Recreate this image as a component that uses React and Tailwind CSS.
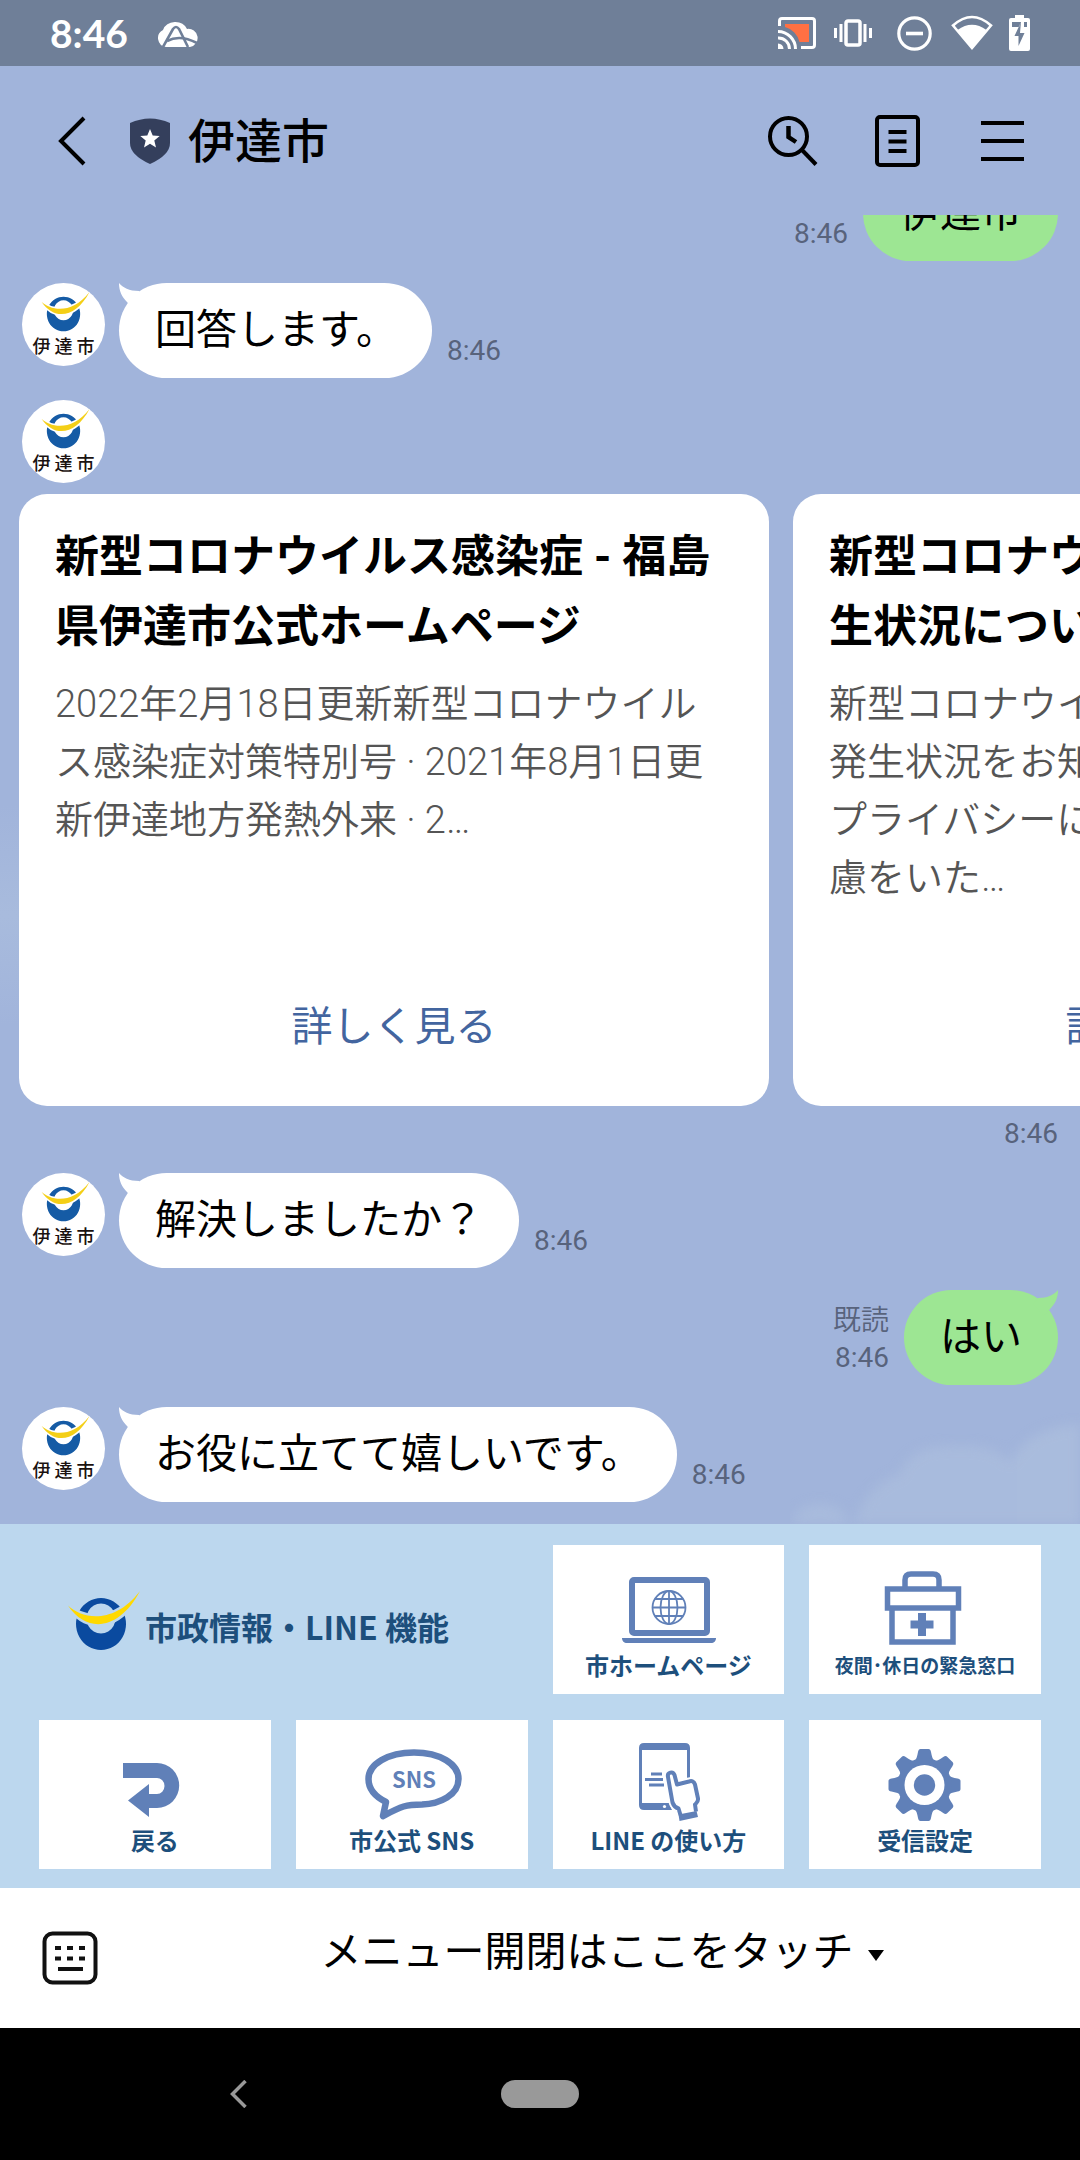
const FONT = "font-[Roboto,'Noto_Sans_CJK_JP',sans-serif]";
const MENU_FONT = "font-['Noto_Sans_CJK_JP',sans-serif]";

function Emblem({ className, blue, yellow, gap }) {
  return (
    <svg viewBox="0 0 72 60" className={className} aria-hidden="true">
      <path
        fillRule="evenodd"
        fill={blue}
        d="M33 7a25 26 0 1 0 0.01 0zM33 12.5a14.5 15 0 1 1 -0.01 0z"
      />
      <path
        d="M0 14.5C14 28 46 34 72 0C52 38 20 44 0 14.5z"
        fill={gap}
        stroke={gap}
        strokeWidth="5"
      />
      <path d="M0 14.5C14 28 46 34 72 0C52 38 20 44 0 14.5z" fill={yellow} />
    </svg>
  );
}

function Avatar() {
  return (
    <div className="flex size-[83px] shrink-0 flex-col items-center overflow-hidden rounded-full bg-white pt-[9px]">
      <Emblem className="ml-[3px] h-[40px] w-[49px]" blue="#155ba5" yellow="#f4cf17" gap="#ffffff" />
      <div className={`${MENU_FONT} mt-[2px] flex gap-1 text-[18px] leading-[22px] font-medium text-[#1a1210]`}>
        <span>伊</span>
        <span>達</span>
        <span>市</span>
      </div>
    </div>
  );
}

function Tail({ className }) {
  return (
    <svg viewBox="0 0 26 26" className={className} aria-hidden="true">
      <path d="M0 0C4 4.500 10 8 20 8L25 14L14 26L8 19C3 14 0 8 0 0z" fill="currentColor" />
    </svg>
  );
}

function Time({ read }) {
  return (
    <div className="flex flex-col items-end pb-[9px] text-[28px] leading-[37px] text-[#58637c]">
      {read && <span className="font-[350]">既読</span>}
      <time dateTime="08:46">8:46</time>
    </div>
  );
}

function Received({ text, stop }) {
  return (
    <div className="flex pl-[22px]">
      <Avatar />
      <div className="ml-[14px] flex items-end gap-[15px]">
        <div className="relative text-white">
          <Tail className="absolute top-0 left-0 size-[26px]" />
          <p
            className={`rounded-full bg-white py-[16px] pl-[36px] text-[41px] leading-[63px] text-black ${stop ? "pr-[35px]" : "pr-[36px]"}`}
          >
            {text}
          </p>
        </div>
        <Time />
      </div>
    </div>
  );
}

function Sent({ text, read }) {
  return (
    <div className="flex items-end justify-end gap-[15px] pr-[22px]">
      <Time read={read} />
      <div className="relative text-[#9de693]">
        <Tail className="absolute top-0 right-0 size-[26px] -scale-x-100" />
        <p className="rounded-full bg-[#9de693] px-[36px] py-[16px] text-[41px] leading-[63px] text-black">{text}</p>
      </div>
    </div>
  );
}

function Card({ title, body }) {
  return (
    <article className="flex h-[612px] w-[750px] shrink-0 flex-col rounded-[28px] bg-white px-[36px] pt-[28px]">
      <h2 className="text-[44px] leading-[70px] font-bold whitespace-nowrap text-black">
        {title.map((line) => (
          <span key={line} className="block">{line}</span>
        ))}
      </h2>
      <p className="mt-[13px] text-[38px] leading-[58px] font-[350] whitespace-nowrap text-[#555555]">
        {body.map((line) => (
          <span key={line} className="block">{line}</span>
        ))}
      </p>
      <a href="#detail" className="mt-auto mb-[48px] text-center text-[41px] leading-[62px] text-[#43659f]">
        詳しく見る
      </a>
    </article>
  );
}

function LaptopIcon() {
  return (
    <svg viewBox="0 0 100 100" className="size-[100px]" fill="none" stroke="#6080b8" aria-hidden="true">
      <rect x="14" y="33" width="75" height="53" rx="2" strokeWidth="6" />
      <path d="M4 91h94c0 3-2 5-5 5H9c-3 0-5-2-5-5z" fill="#6080b8" stroke="none" />
      <g strokeWidth="1.8">
        <circle cx="51" cy="60.500" r="16.500" />
        <ellipse cx="51" cy="60.500" rx="8.500" ry="16.500" />
        <path d="M51 44v33M34.500 60.500h33M37 52h28M37 69h28" />
      </g>
    </svg>
  );
}

function KitIcon() {
  return (
    <svg viewBox="0 0 100 100" className="size-[100px]" fill="none" stroke="#6080b8" strokeWidth="5.5" aria-hidden="true">
      <path d="M30 41v-8q0-6 6-6h22q6 0 6 6v8" />
      <rect x="12.500" y="42" width="71" height="19" />
      <path d="M17 63v32h61V63" />
      <path d="M47 66v23M35.500 77.500h23" strokeWidth="8" />
    </svg>
  );
}

function BackIcon() {
  return (
    <svg viewBox="0 0 100 100" className="size-[100px]" aria-hidden="true">
      <path d="M18 41H52A22 22.300 0 0 1 52 86H44V95L23 78.500L44 62V72H52A7.500 8 0 0 0 52 56H18Z" fill="#6080b8" />
    </svg>
  );
}

function SnsIcon() {
  return (
    <svg viewBox="0 0 104 100" className="h-[100px] w-[104px]" aria-hidden="true">
      <path
        d="M54 30.500C80 30.500 98.500 42 98.500 57C98.500 73 80 82 62 82.500C46 82.500 42 84 23 94L26 80C14 74 8.500 66 8.500 57C8.500 42 28 30.500 54 30.500Z"
        fill="none"
        stroke="#6080b8"
        strokeWidth="6.5"
        strokeLinejoin="round"
      />
      <text x="54" y="65.500" textAnchor="middle" className={`${MENU_FONT} text-[22px] font-bold`} fill="#6080b8">
        SNS
      </text>
    </svg>
  );
}

function PhoneIcon() {
  return (
    <svg viewBox="0 0 100 104" className="h-[104px] w-[100px]" fill="none" stroke="#6080b8" aria-hidden="true">
      <path d="M54 92H26q-5 0-5-5V30q0-5 5-5h41q5 0 5 5V60H69V32H24V85H51z" fill="#6080b8" stroke="none" />
      <circle cx="46.500" cy="88.500" r="1.600" fill="#ffffff" stroke="none" />
      <path d="M33 56h11M27 61.500h18M31 67h15" strokeWidth="3" />
      <path
        d="M49 59c-1-5 6-6 7-2l3 9 12-3c3-1 5 0 6 3l4 14c1 3-1 5-4 6l1 8-15 3-2-6c-4-1-6-3-7-7z"
        fill="#ffffff"
        stroke="#ffffff"
        strokeWidth="7"
      />
      <path
        d="M62.500 97l-2-6.500c-3-1-5-3-6-6L50 59c-1-5 5-6 6.500-2l2.500 9.500 12-3c3-1 5 0 6 3l3 14c.5 3-1 4-3 6l1 7"
        fill="#ffffff"
        strokeWidth="4"
        strokeLinejoin="round"
      />
      <path d="M60.500 96.500L78.500 93L80 99L61.500 103z" fill="#6080b8" stroke="none" />
    </svg>
  );
}

function GearIcon() {
  const angles = [0, 45, 90, 135, 180, 225, 270, 315];
  return (
    <svg viewBox="0 0 100 100" className="size-[100px]" fill="#6080b8" aria-hidden="true">
      {angles.map((a) => (
        <path
          key={a}
          transform={`translate(49.5 63) rotate(${a})`}
          d="M-11 -22L-8 -27Q-7 -30 -6.500 -33Q-6 -36 -4 -36H4Q6 -36 6.500 -33Q7 -30 8 -27L11 -22z"
        />
      ))}
      <circle cx="49.500" cy="63" r="27" />
      <circle cx="49.500" cy="63" r="20" fill="#ffffff" />
      <circle cx="49.500" cy="63" r="10.700" />
    </svg>
  );
}

function Tile({ icon, label, small }) {
  return (
    <button type="button" className="flex h-[149px] min-w-0 flex-col items-center bg-white">
      <span className="flex h-[102px] items-end justify-center">{icon}</span>
      <span
        className={`${MENU_FONT} leading-[36px] font-bold whitespace-nowrap text-[#1d4f7c] ${small ? "text-[19px]" : "text-[24px]"}`}
      >
        {label}
      </span>
    </button>
  );
}

function StatusBar() {
  return (
    <div className="flex h-[66px] shrink-0 items-center justify-between bg-[#6f7f98] pr-[50px] pl-[50px] text-white">
      <div className="flex items-center gap-[28px]">
        <span className="font-[Lato,sans-serif] text-[39px] leading-[66px] font-bold">8:46</span>
        <svg viewBox="0 0 42 28" className="h-[28px] w-[42px]" fill="#ffffff" aria-hidden="true">
          <path d="M10 28a9 9 0 0 1-3-17A13 12 0 0 1 31 10a9 9 0 0 1 3 18z" />
          <path d="M7 28L17 10q3-4 6 0l9 18" fill="none" stroke="#6f7f98" strokeWidth="2.600" />
          <path d="M11 22Q24 15 41 24" fill="none" stroke="#6f7f98" strokeWidth="2.600" />
        </svg>
      </div>
      <div className="flex items-center">
        <svg viewBox="0 0 38 32" className="h-[32px] w-[38px]" fill="none" stroke="#ffffff" strokeWidth="3" aria-hidden="true">
          <path d="M7 7h24v18H21.500A20 20 0 0 0 7 10z" fill="#ff7043" stroke="none" />
          <path d="M1.500 9V4q0-2.500 2.500-2.500h30q2.500 0 2.500 2.500v24q0 2.500-2.500 2.500H23" />
          <path d="M0 14.500A17.500 17.500 0 0 1 17.500 32M0 21A11 11 0 0 1 11.500 32" />
          <path d="M0 26.500A5.500 5.500 0 0 1 5.500 32H0z" fill="#ffffff" stroke="none" />
        </svg>
        <svg viewBox="0 0 38 28" className="ml-[18px] h-[28px] w-[38px]" fill="none" stroke="#ffffff" strokeWidth="3" aria-hidden="true">
          <rect x="12" y="2" width="14" height="24" rx="2" strokeWidth="3.500" />
          <path d="M1.500 9v10M7 5v18M31 5v18M36.500 9v10" />
        </svg>
        <svg viewBox="0 0 35 35" className="ml-[25px] size-[35px]" fill="none" stroke="#ffffff" strokeWidth="3.200" aria-hidden="true">
          <circle cx="17.500" cy="17.500" r="15.700" />
          <path d="M9 17.500h17" strokeWidth="3.600" />
        </svg>
        <svg viewBox="0 0 42 36" className="ml-[19px] h-[36px] w-[42px]" aria-hidden="true">
          <path d="M2 10.500Q21 -6.500 40 10.500L21 33z" fill="none" stroke="#ffffff" strokeWidth="2.600" />
          <path d="M6.500 15Q21 4.500 35.500 15L21 34z" fill="#ffffff" />
        </svg>
        <svg viewBox="0 0 21 36" className="ml-[16px] h-[36px] w-[21px]" aria-hidden="true">
          <path d="M6 0h9v3h4q2 0 2 2v29q0 2-2 2H2q-2 0-2-2V5q0-2 2-2h4z" fill="#ffffff" />
          <path d="M3 7h9l-2 5H3zM15 7h3v5h-3zM12 7L5.500 21H9.500V31L15.500 18H11z" fill="#6f7f98" />
        </svg>
      </div>
    </div>
  );
}

function Header() {
  return (
    <header className="flex h-[149px] shrink-0 items-center px-[56px] text-black">
      <button type="button" aria-label="戻る">
        <svg viewBox="0 0 30 50" className="h-[50px] w-[30px]" fill="none" stroke="currentColor" strokeWidth="4" aria-hidden="true">
          <path d="M28 2L5 25L28 48" />
        </svg>
      </button>
      <svg viewBox="0 0 40 46" className="ml-[44px] h-[46px] w-[40px]" aria-hidden="true">
        <path d="M0 5Q20 -4 40 5V25Q40 37 20 46Q0 37 0 25z" fill="#343f5c" />
        <path d="M20 11l2.700 6.500 7 .5-5.400 4.600 1.700 6.900-6-3.800-6 3.800 1.700-6.900L10.300 18l7-.5z" fill="#ffffff" />
      </svg>
      <h1 className="mt-[2px] ml-[18px] text-[47px] leading-[70px] font-medium">伊達市</h1>
      <div className="ml-auto flex items-center">
        <button type="button" aria-label="検索">
          <svg viewBox="0 0 50 50" className="size-[50px]" fill="none" stroke="currentColor" strokeWidth="4" aria-hidden="true">
            <circle cx="20.500" cy="20.500" r="18.500" />
            <path d="M34 34L48 48.500" />
            <path d="M20.500 10v11l7.500 5" strokeWidth="4.500" />
          </svg>
        </button>
        <button type="button" aria-label="ノート" className="ml-[57px]">
          <svg viewBox="0 0 45 52" className="h-[52px] w-[45px]" fill="none" stroke="currentColor" strokeWidth="4" aria-hidden="true">
            <rect x="2" y="2" width="41" height="48" rx="3" />
            <path d="M13.500 17h18M13.500 26.500h18M13.500 36h18" />
          </svg>
        </button>
        <button type="button" aria-label="メニュー" className="ml-[61px]">
          <svg viewBox="0 0 43 42" className="h-[42px] w-[43px]" stroke="currentColor" strokeWidth="4" aria-hidden="true">
            <path d="M0 3h43M0 21h43M0 39h43" />
          </svg>
        </button>
      </div>
    </header>
  );
}

function Clouds() {
  return (
    <>
      <div className="pointer-events-none absolute right-0 bottom-0 h-[120px] w-[290px] overflow-hidden">
        <svg viewBox="0 0 290 120" className="h-full w-full blur-[6px]" fill="#b0c2de" aria-hidden="true">
          <g opacity="0.55">
            <ellipse cx="30" cy="124" rx="30" ry="24" />
            <path d="M60 130Q75 80 110 70Q120 40 165 42Q205 40 220 58Q240 20 300 20V130z" />
          </g>
        </svg>
      </div>
      <div className="pointer-events-none absolute top-[590px] left-0 h-[220px] w-[20px] bg-linear-to-b from-transparent via-[#a8bbdd] to-transparent" />
    </>
  );
}

export default function App() {
  return (
    <div className={`${FONT} flex h-screen w-full flex-col overflow-hidden bg-[#a1b4db]`} lang="ja">
      <StatusBar />
      <Header />
      <main className="relative flex min-h-0 flex-1 flex-col justify-end gap-[22px] overflow-hidden pb-[22px]">
        <Clouds />
        <Sent text="伊達市" />
        <Received text="回答します。" stop />
        <section className="relative">
          <div className="pl-[22px]">
            <Avatar />
          </div>
          <div className="mt-[11px] flex gap-[24px] overflow-hidden pl-[19px]">
            <Card
              title={["新型コロナウイルス感染症 - 福島", "県伊達市公式ホームページ"]}
              body={["2022年2月18日更新新型コロナウイル", "ス感染症対策特別号 · 2021年8月1日更", "新伊達地方発熱外来 · 2…"]}
            />
            <Card
              title={["新型コロナウイルス感染症の発", "生状況について"]}
              body={["新型コロナウイルス感染症の", "発生状況をお知らせします。", "プライバシーに十分なご配", "慮をいた…"]}
            />
          </div>
          <div className="pt-[11px] pr-[22px] text-right text-[28px] leading-[34px] text-[#58637c]">
            <time dateTime="08:46">8:46</time>
          </div>
        </section>
        <Received text="解決しましたか？" />
        <Sent text="はい" read />
        <Received text="お役に立てて嬉しいです。" stop />
      </main>
      <nav className="grid shrink-0 grid-cols-4 gap-x-[25px] gap-y-[26px] bg-[#bcd7ee] px-[39px] pt-[21px] pb-[19px]">
        <div className="col-span-2 flex items-center gap-[5px] pt-[12px] pl-[29px]">
          <Emblem className="mb-[9px] h-[60px] w-[72px]" blue="#0a4a9f" yellow="#ffd900" gap="#bcd7ee" />
          <span className={`${MENU_FONT} text-[32px] leading-[48px] font-bold whitespace-nowrap text-[#1d4f7c]`}>
            市政情報・LINE 機能
          </span>
        </div>
        <Tile icon={<LaptopIcon />} label="市ホームページ" />
        <Tile icon={<KitIcon />} label="夜間･休日の緊急窓口" small />
        <Tile icon={<BackIcon />} label="戻る" />
        <Tile icon={<SnsIcon />} label="市公式 SNS" />
        <Tile icon={<PhoneIcon />} label="LINE の使い方" />
        <Tile icon={<GearIcon />} label="受信設定" />
      </nav>
      <footer className="flex h-[140px] shrink-0 items-center bg-white pl-[42px] text-black">
        <button type="button" aria-label="キーボード">
          <svg viewBox="0 0 56 54" className="h-[54px] w-[56px]" fill="none" stroke="#111111" strokeWidth="4" aria-hidden="true">
            <rect x="2.500" y="2.500" width="51" height="49" rx="8" />
            <path d="M13 17h6M25 17h6M37 17h6M13 27.500h6M25 27.500h6M37 27.500h6M16 38h25" />
          </svg>
        </button>
        <button type="button" className="mb-[12px] flex flex-1 items-center justify-center gap-[14px] pl-[26px] text-[41px] leading-[62px]">
          メニュー開閉はここをタッチ
          <svg viewBox="0 0 16 11" className="mt-[6px] h-[11px] w-[16px]" aria-hidden="true">
            <path d="M0 0h16L8 11z" fill="currentColor" />
          </svg>
        </button>
      </footer>
      <div className="grid h-[132px] shrink-0 grid-cols-3 items-center bg-black">
        <button type="button" aria-label="前の画面" className="justify-self-end pr-[113px]">
          <svg viewBox="0 0 17 28" className="h-[28px] w-[17px]" fill="none" stroke="#999999" strokeWidth="3.500" aria-hidden="true">
            <path d="M15.500 1L2.500 14L15.500 27" />
          </svg>
        </button>
        <button type="button" aria-label="ホーム" className="h-[28px] w-[78px] justify-self-center rounded-full bg-[#999999]" />
      </div>
    </div>
  );
}
